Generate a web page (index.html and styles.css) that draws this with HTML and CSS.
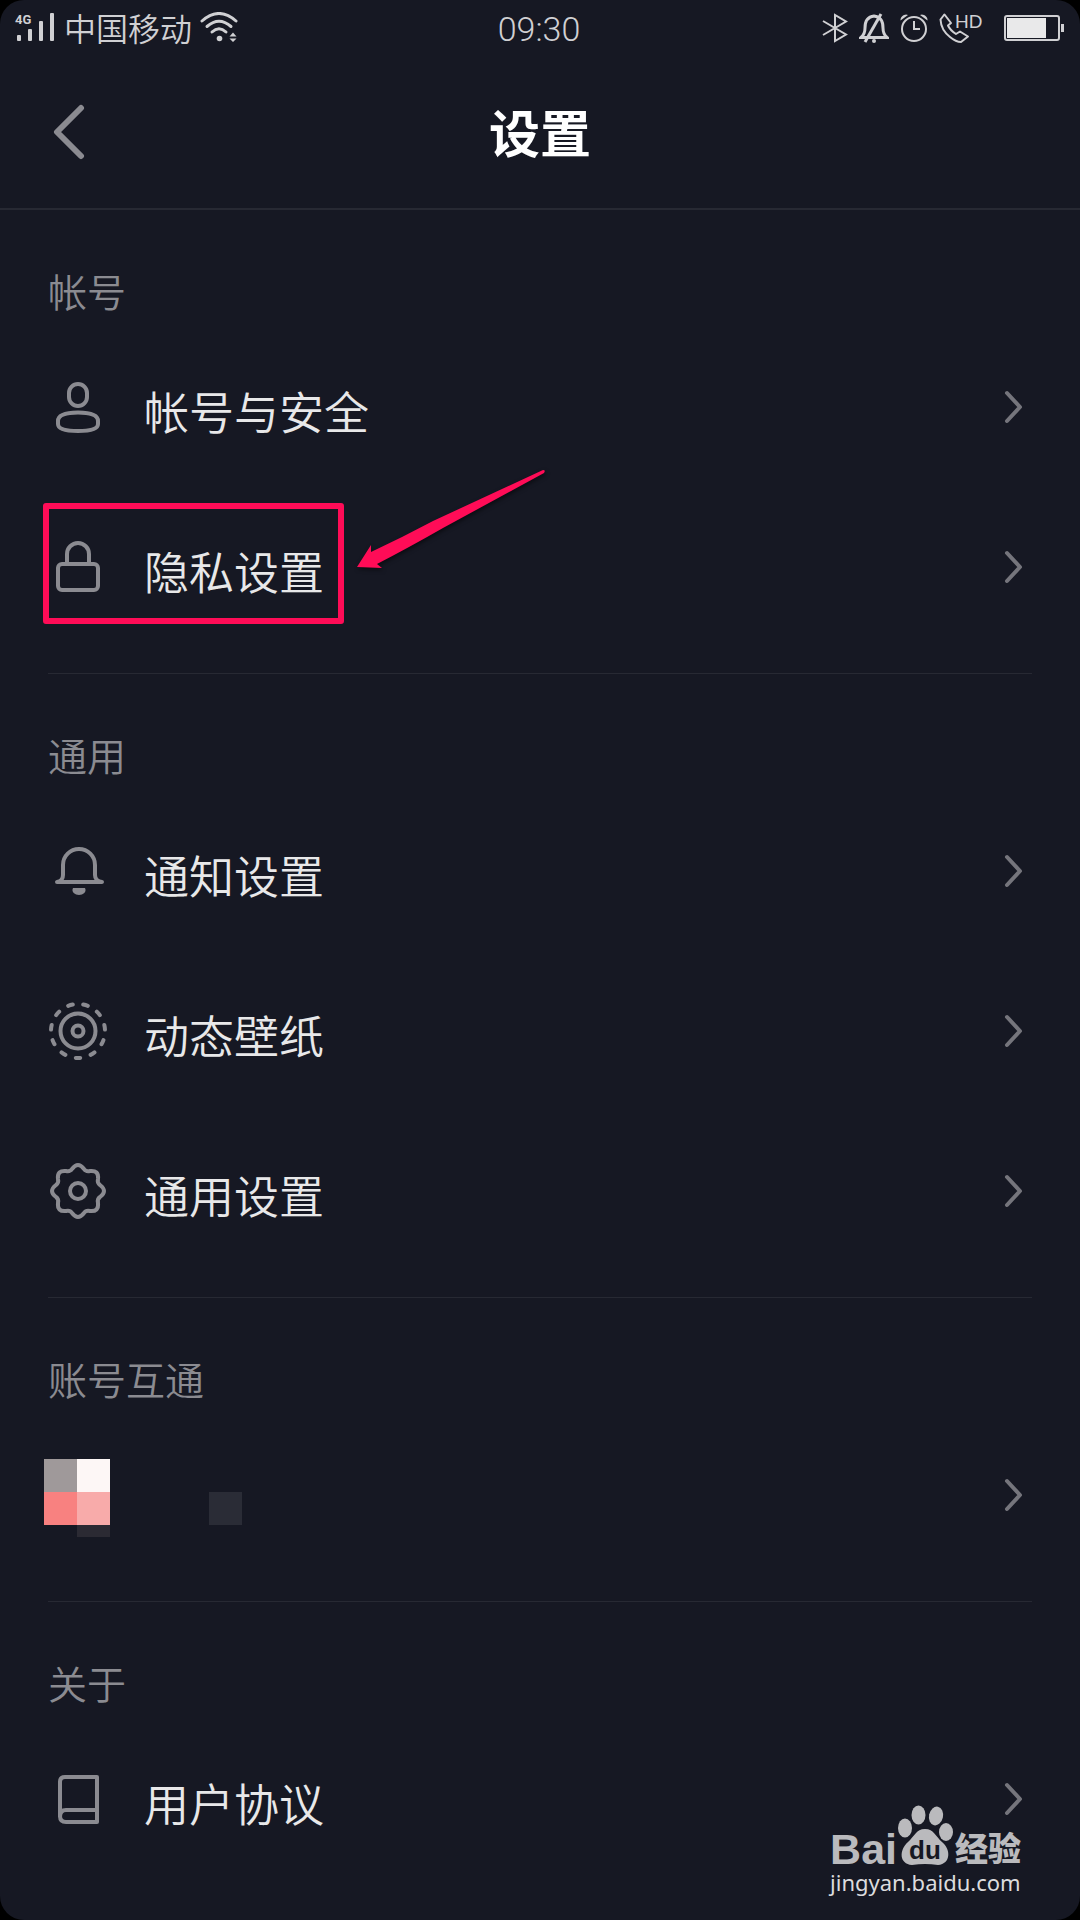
FILE: index.html
```html
<!DOCTYPE html>
<html lang="zh-CN">
<head>
<meta charset="utf-8">
<meta name="viewport" content="width=device-width, initial-scale=1">
<title>设置</title>
<link rel="stylesheet" href="styles.css">
</head>
<body>
<svg class="defs" aria-hidden="true">
  <symbol id="chevron" viewBox="0 0 28 40"><path d="M3 6 L16 20 L3 34" fill="none" stroke="currentColor" stroke-width="4" stroke-linecap="round" stroke-linejoin="round"/></symbol>
</svg>
<div class="screen">
  <div class="status-bar">
    <div class="status-left">
      <svg class="signal" viewBox="0 0 42 32" aria-hidden="true"><g fill="currentColor"><rect x="3" y="23" width="4" height="6" rx="1"/><rect x="14" y="17" width="4" height="12" rx="1"/><rect x="25" y="9" width="4" height="20" rx="1"/><rect x="36" y="1" width="4" height="28" rx="1"/><text class="signal-type" x="1" y="12">4G</text></g></svg>
      <span class="carrier">中国移动</span>
      <svg class="wifi" viewBox="0 0 38 32" aria-hidden="true"><g fill="none" stroke="currentColor" stroke-width="3" stroke-linecap="round"><path d="M2 9 Q19 -6 36 9"/><path d="M7 14.500 Q19 4 31 14.500"/><path d="M12 20 Q19 13.500 26 20"/></g><circle cx="19.500" cy="26.500" r="2.800" fill="currentColor"/><path d="M29.500 24.500 L33 20.500 L36.500 24.500 Z M29.500 26.500 H36.500 L33 30 Z" fill="currentColor"/></svg>
    </div>
    <time class="clock">09:30</time>
    <div class="status-right">
      <svg width="26" height="32" viewBox="0 0 26 32" aria-hidden="true"><path d="M1 9 L24 22.500 L13 29 V3 L24 9.500 L1 23" fill="none" stroke="currentColor" stroke-width="2"/></svg>
      <svg width="30" height="32" viewBox="0 0 30 32" aria-hidden="true"><g fill="none" stroke="currentColor" stroke-width="3"><path d="M2 25.500 Q6 22 6 16 Q6 5 15 4 Q24 5 24 16 Q24 22 28 25.500 Z"/><path d="M22 2 L6 30"/></g><circle cx="15" cy="29" r="2" fill="currentColor"/></svg>
      <svg width="28" height="32" viewBox="0 0 28 32" aria-hidden="true"><g fill="none" stroke="currentColor" stroke-width="2"><circle cx="14" cy="17" r="12"/><path d="M14 9 V17 H20"/></g><path d="M0.500 8.500 A5.500 5.500 0 0 1 8 3 Z M27.500 8.500 A5.500 5.500 0 0 0 20 3 Z" fill="currentColor"/></svg>
      <svg width="46" height="32" viewBox="0 0 46 32" aria-hidden="true"><path d="M5 3 L1.500 7.500 Q2 18 11 25 Q17 30 22 30 L29 24.500 L21 19.500 L17 22 Q11 18 9 13.500 L12 11 L5.500 2.500 Z" fill="none" stroke="currentColor" stroke-width="2" stroke-linejoin="round"/><text class="hd" x="16" y="16">HD</text></svg>
      <svg class="battery" width="60" height="28" viewBox="0 0 60 28" aria-hidden="true"><rect x="1" y="2" width="54" height="24" rx="2" fill="none" stroke="currentColor" stroke-width="2"/><rect x="3" y="4" width="39" height="20" fill="#e9e9ea"/><rect x="57" y="10" width="3" height="8" fill="currentColor"/></svg>
    </div>
  </div>

  <header class="header">
    <button class="back" type="button" aria-label="返回"><svg width="34" height="60" viewBox="0 0 34 60"><path d="M30 6 L6 30 L30 54" fill="none" stroke="currentColor" stroke-width="6" stroke-linecap="round" stroke-linejoin="round"/></svg></button>
    <h1 class="title">设置</h1>
  </header>

  <main class="settings">
    <section class="group">
      <h2 class="group-title">帐号</h2>
      <a class="row" href="#security">
        <svg class="icon" viewBox="0 0 60 60" aria-hidden="true"><rect x="21" y="7" width="18" height="22" rx="9"/><path d="M10 44 C10 38 18 35.500 30 35.500 C42 35.500 50 38 50 44 V47 C50 52 43 54 30 54 C17 54 10 52 10 47 Z"/></svg>
        <span class="row-label">帐号与安全</span>
        <svg class="chevron" aria-hidden="true"><use href="#chevron"/></svg>
      </a>
      <a class="row" href="#privacy">
        <svg class="icon" viewBox="0 0 60 60" aria-hidden="true"><path d="M19 27 V17 A11 11 0 0 1 41 17 V27"/><rect x="10" y="27" width="40" height="26" rx="4"/></svg>
        <span class="row-label">隐私设置</span>
        <svg class="chevron" aria-hidden="true"><use href="#chevron"/></svg>
        <span class="highlight"></span>
        <svg class="arrow" viewBox="0 0 200 110" aria-hidden="true"><path d="M4 101 L18 79 V86 Q50 71 80 55 L190 4 Q193 4 191 7 L90 62 Q55 82 24 98 L29 102 Z"/></svg>
      </a>
    </section>

    <section class="group">
      <h2 class="group-title">通用</h2>
      <a class="row" href="#notifications">
        <svg class="icon" viewBox="0 0 60 60" aria-hidden="true"><path d="M9 41 Q15 40 15 34 V24 A16 16 0 0 1 47 24 V34 Q47 40 54 41 Z"/><path class="solid" d="M25 47 H37 C39 51 35 54 31 54 C27 54 23 51 25 47 Z"/></svg>
        <span class="row-label">通知设置</span>
        <svg class="chevron" aria-hidden="true"><use href="#chevron"/></svg>
      </a>
      <a class="row" href="#wallpaper">
        <svg class="icon" viewBox="0 0 60 60" aria-hidden="true"><circle cx="30" cy="30" r="17.500"/><circle cx="30" cy="30" r="5.500"/><circle cx="30" cy="30" r="27" pathLength="110" stroke-dasharray="3 7" stroke-dashoffset="-26"/></svg>
        <span class="row-label">动态壁纸</span>
        <svg class="chevron" aria-hidden="true"><use href="#chevron"/></svg>
      </a>
      <a class="row" href="#general">
        <svg class="icon" viewBox="0 0 60 60" aria-hidden="true"><circle cx="30" cy="30" r="8"/><path d="M24 8 Q30 0 36 8 Q38 11 42 10 Q51 9 50 18 Q49 22 52 24 Q60 30 52 36 Q49 38 50 42 Q51 51 42 50 Q38 49 36 52 Q30 60 24 52 Q22 49 18 50 Q9 51 10 42 Q11 38 8 36 Q0 30 8 24 Q11 22 10 18 Q9 9 18 10 Q22 11 24 8 Z"/></svg>
        <span class="row-label">通用设置</span>
        <svg class="chevron" aria-hidden="true"><use href="#chevron"/></svg>
      </a>
    </section>

    <section class="group">
      <h2 class="group-title">账号互通</h2>
      <a class="row" href="#linked" aria-label="账号互通">
        <svg class="mosaic" viewBox="0 0 198 78" aria-hidden="true"><g shape-rendering="crispEdges"><rect width="33" height="33" fill="#9f999a"/><rect x="33" width="33" height="33" fill="#fdf7f6"/><rect y="33" width="33" height="33" fill="#f88180"/><rect x="33" y="33" width="33" height="33" fill="#f8abaa"/><rect x="33" y="66" width="33" height="12" fill="#2b2a33"/><rect x="165" y="33" width="33" height="33" fill="#2a2c36"/></g></svg>
        <svg class="chevron" aria-hidden="true"><use href="#chevron"/></svg>
      </a>
    </section>

    <section class="group">
      <h2 class="group-title">关于</h2>
      <a class="row" href="#terms">
        <svg class="icon" viewBox="0 0 60 60" aria-hidden="true"><path d="M49 8 H17 Q12 8 12 13 V47 Q12 53 18 53 H49 Z M12 48 Q12 41 18 41 H49"/></svg>
        <span class="row-label">用户协议</span>
        <svg class="chevron" aria-hidden="true"><use href="#chevron"/></svg>
      </a>
    </section>
  </main>

  <div class="watermark">
    <div class="brand">
      <span class="brand-latin">Bai</span>
      <svg class="paw" viewBox="0 0 58 62" aria-hidden="true"><g fill="currentColor"><ellipse cx="8" cy="24" rx="7" ry="9.500"/><ellipse cx="21.500" cy="11" rx="7" ry="9.500"/><ellipse cx="39" cy="12" rx="7" ry="9.500" transform="rotate(12 39 12)"/><ellipse cx="49" cy="28" rx="7" ry="9"/><path d="M28 25 C37 25 39 33 45 38 C54 45 54 60 41 61 Q28 59 15 61 C2 60 2 46 11 38 C17 33 19 25 28 25 Z"/></g><text class="du" x="28" y="55" text-anchor="middle">du</text></svg>
      <span class="brand-cjk">经验</span>
    </div>
    <div class="brand-url">jingyan.baidu.com</div>
  </div>
</div>
</body>
</html>
```
FILE: styles.css
```css
* { box-sizing: border-box; }

body {
  margin: 0;
  background: #000;
  color: #e8e8e9;
  font-family: "Noto Sans CJK SC", sans-serif;
  font-weight: 350;
}

.defs { display: none; }

.screen {
  position: relative;
  min-height: 100vh;
  border-radius: 24px;
  background: #161823;
  overflow: hidden;
}

/* Status bar */
.status-bar {
  display: grid;
  grid-template-columns: 1fr auto 1fr;
  align-items: center;
  height: 56px;
  padding: 0 16px 0 14px;
  color: #d0d0d3;
  font-size: 32px;
  line-height: 32px;
}

.status-left,
.status-right {
  display: flex;
  align-items: center;
}

.status-left { gap: 8px; }

.status-right {
  justify-content: flex-end;
  gap: 11px;
}

.signal { width: 42px; height: 32px; }
.signal-type { font: 700 13px Roboto, sans-serif; }
.carrier { padding-bottom: 2px; }
.wifi { width: 38px; height: 32px; }
.clock {
  padding-top: 2px;
  font-family: Roboto, sans-serif;
  font-size: 34px;
  font-weight: 300;
}
.hd { fill: currentColor; font: 400 19px "Liberation Sans", sans-serif; }
.battery { margin-left: 8px; }

/* Header */
.header {
  display: grid;
  grid-template-columns: 1fr auto 1fr;
  align-items: center;
  height: 154px;
  border-bottom: 2px solid #272933;
  padding: 0 48px;
}

.back {
  display: flex;
  justify-self: start;
  padding: 0 3px;
  border: 0;
  background: none;
  color: #8b8b91;
}

.title {
  margin: 0;
  padding-bottom: 2px;
  color: #fff;
  font-size: 51px;
  font-weight: 700;
  line-height: 60px;
}

/* Setting groups */
.settings { padding: 0 48px; }

.group {
  padding: 50px 0 26px;
  border-bottom: 1px solid #272933;
}

.group:last-child { border-bottom: 0; }

.group-title {
  height: 67px;
  margin: 0;
  color: #8b8b91;
  font-size: 39px;
  font-weight: 350;
  line-height: 60px;
}

.row {
  position: relative;
  display: flex;
  align-items: center;
  gap: 36px;
  height: 160px;
  color: inherit;
  text-decoration: none;
}

.icon {
  width: 60px;
  height: 60px;
  fill: none;
  stroke: #8b8b91;
  stroke-width: 4;
  stroke-linecap: round;
  stroke-linejoin: round;
}

.icon .solid { fill: #8b8b91; stroke: none; }

.row-label {
  padding-top: 7px;
  font-size: 45px;
  line-height: 60px;
}

.chevron {
  width: 28px;
  height: 40px;
  margin-left: auto;
  color: #75757c;
}

.mosaic {
  width: 198px;
  height: 78px;
  margin: 6px 0 0 -4px;
}

/* Callout over the privacy row */
.highlight {
  position: absolute;
  top: 16px;
  left: -5px;
  width: 301px;
  height: 121px;
  border: 6px solid #ff0c57;
  border-radius: 3px;
}

.arrow {
  position: absolute;
  top: -21px;
  left: 305px;
  width: 200px;
  height: 110px;
  fill: #ff0c57;
  filter: drop-shadow(1px 2px 2px #0008);
}

/* Watermark */
.watermark {
  position: absolute;
  right: 59px;
  bottom: 22px;
  color: #bababd;
}

.brand {
  display: flex;
  align-items: flex-end;
  height: 62px;
}

.brand-latin {
  font: 700 43px/34px "Liberation Sans", sans-serif;
}

.paw { width: 58px; height: 62px; }

.du {
  fill: #161823;
  font: 700 26px "Liberation Sans", sans-serif;
}

.brand-cjk {
  font-size: 33px;
  font-weight: 900;
  line-height: 38px;
}

.brand-url {
  color: #dcdcde;
  font: 400 22px/32px "Noto Sans", sans-serif;
}
```
